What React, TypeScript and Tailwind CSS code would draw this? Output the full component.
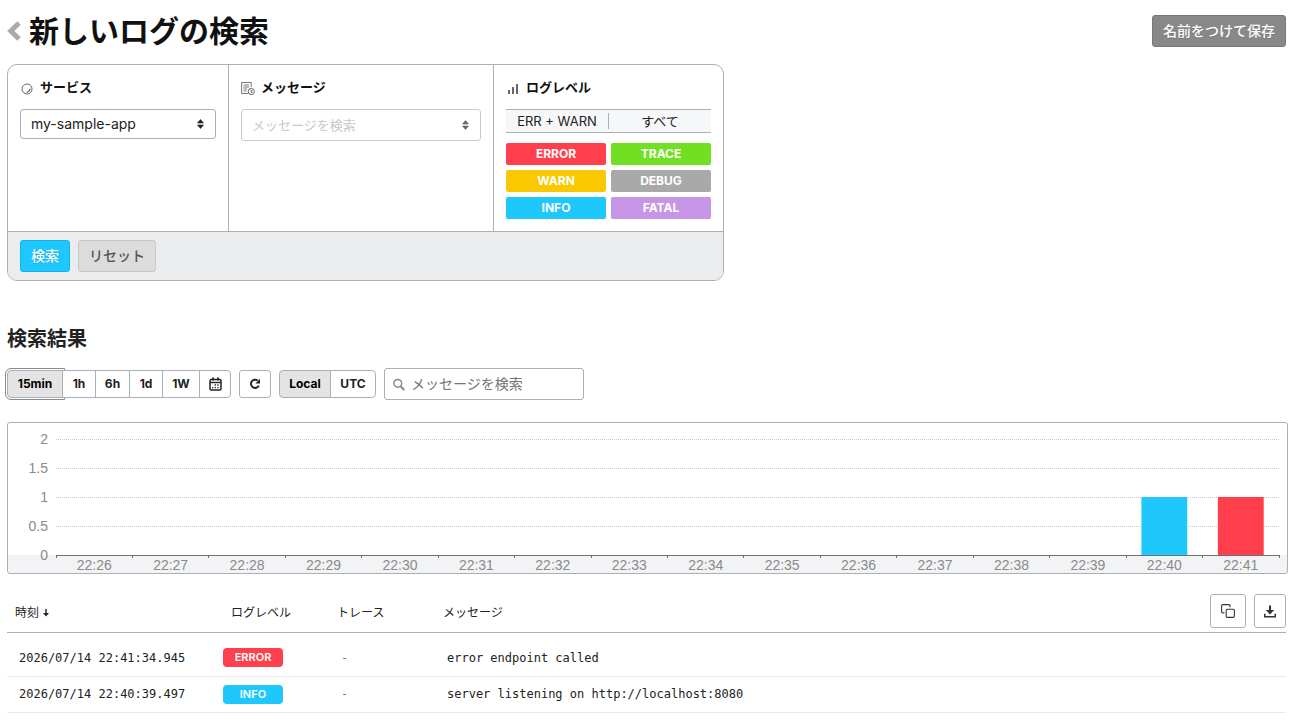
import React from 'react';
import clsx from 'clsx';

const levels = [
  { name: 'ERROR', color: 'bg-[#ff3f4c]' },
  { name: 'TRACE', color: 'bg-[#71df22]' },
  { name: 'WARN', color: 'bg-[#f9c800]' },
  { name: 'DEBUG', color: 'bg-[#a9a9a9]' },
  { name: 'INFO', color: 'bg-[#1ec7fc]' },
  { name: 'FATAL', color: 'bg-[#c795e5]' },
];

const logs = [
  { time: '2026/07/14 22:41:34.945', level: 'ERROR', color: 'bg-[#ff3f4c]', message: 'error endpoint called' },
  { time: '2026/07/14 22:40:39.497', level: 'INFO', color: 'bg-[#1ec7fc]', message: 'server listening on http://localhost:8080' },
];

const buckets = Array.from({ length: 16 }, (_, i) => ({
  label: `22:${26 + i}`,
  count: i >= 14 ? 1 : 0,
  color: i === 15 ? '#ff3f4c' : '#1ec7fc',
}));

const yTicks = [2, 1.5, 1, 0.5, 0];

function SortArrows({ className }: { className?: string }) {
  return (
    <svg className={className} width="7" height="10" viewBox="0 0 7 10" fill="currentColor" aria-hidden="true">
      <path d="M3.5 0.5 6.5 4h-6zM3.5 9.5 6.5 6h-6z" stroke="currentColor" strokeWidth="0.6" strokeLinejoin="round" />
    </svg>
  );
}

function ServiceIcon() {
  return (
    <svg width="14" height="14" viewBox="0 0 14 14" fill="none" stroke="#555" aria-hidden="true">
      <circle cx="7" cy="8" r="5" strokeWidth="0.9" />
      <path d="M10 7.8a3 3 0 0 1-3.2 3.2l2-.4z" strokeWidth="0.8" />
    </svg>
  );
}

function MessageIcon() {
  return (
    <svg width="14" height="14" viewBox="0 0 14 14" fill="none" stroke="#666" aria-hidden="true">
      <path d="M7 12.5H.6V1.5h9.6v4.6M2.5 4h5.6M2.5 6h5.6M2.5 8h3.6M2.5 10h3" strokeWidth="0.9" />
      <circle cx="10.3" cy="10.5" r="3.1" />
      <path d="M9.6 8.8l1.4 3.2M10.9 8.8v3" strokeWidth="0.8" />
    </svg>
  );
}

function LevelIcon() {
  return (
    <svg width="14" height="14" viewBox="0 0 14 14" fill="#666" aria-hidden="true">
      <path d="M2 9h2v4H2zM6 6h2v7H6zM10 3h2v10h-2z" />
    </svg>
  );
}

function CalendarIcon() {
  return (
    <svg width="13" height="14" viewBox="0 0 13 14" fill="none" stroke="#222" aria-hidden="true">
      <rect x="1" y="2.5" width="11" height="10.5" rx="1.2" strokeWidth="1.5" />
      <path d="M1 5.5h11" strokeWidth="1.4" />
      <path d="M4 .5v3M9 .5v3" strokeWidth="1.8" />
      <path d="M5.6 8h1.3M8.3 8h1.3M3 10.6h1.3M5.6 10.6h1.3M8.3 10.6h1.3" strokeWidth="1.4" />
    </svg>
  );
}

function ReloadIcon() {
  return (
    <svg width="12" height="12" viewBox="0 0 12 12" fill="none" stroke="#222" aria-hidden="true">
      <path d="M8.6 2.6A4.1 4.1 0 1 0 9.8 7.6" strokeWidth="1.9" />
      <path d="M11 .8v4.6H6.4z" fill="#222" stroke="none" />
    </svg>
  );
}

function CopyIcon() {
  return (
    <svg width="14" height="14" viewBox="0 0 14 14" fill="none" stroke="#333" strokeWidth="1.1" aria-hidden="true">
      <rect x="5.2" y="5.2" width="8.2" height="8.2" rx="1.2" />
      <path d="M3.4 8.9H1.8A1.2 1.2 0 0 1 .6 7.7V1.8A1.2 1.2 0 0 1 1.8.6h6a1.2 1.2 0 0 1 1.2 1.2v1.4" />
    </svg>
  );
}

function DownloadIcon() {
  return (
    <svg width="12" height="13" viewBox="0 0 12 13" fill="#333" aria-hidden="true">
      <path d="M5 .5h2V5h3.2L6 9.5 1.8 5H5z" />
      <path d="M.8 8.7v3.1h10.4V8.7" fill="none" stroke="#333" strokeWidth="1.5" />
    </svg>
  );
}

function FilterColumn({ icon, title, children }: { icon: React.ReactNode; title: string; children: React.ReactNode }) {
  return (
    <div className="border-r border-[#aeafb4] p-3 last:border-r-0">
      <h2 className="mb-2.5 flex h-[22px] items-center gap-1.5 text-[13px] font-bold text-[#111]">
        {icon}
        {title}
      </h2>
      {children}
    </div>
  );
}

function FilterPanel() {
  return (
    <form className="w-fit overflow-hidden rounded-[10px] border border-[#aeafb4]" onSubmit={(e) => e.preventDefault()}>
      <div className="flex">
        <FilterColumn icon={<ServiceIcon />} title="サービス">
          <div className="relative w-[196px]">
            <select
              aria-label="サービス"
              className="block h-[30px] w-full appearance-none rounded-[3px] border border-[#aeafb4] bg-white px-2.5 text-sm text-[#222]"
            >
              <option>my-sample-app</option>
            </select>
            <SortArrows className="pointer-events-none absolute top-2.5 right-3 text-[#222]" />
          </div>
        </FilterColumn>

        <FilterColumn icon={<MessageIcon />} title="メッセージ">
          <div className="relative w-[240px]">
            <input
              aria-label="メッセージ"
              placeholder="メッセージを検索"
              className="block h-8 w-full rounded-[3px] border border-[#c9c9cb] px-2.5 text-[13px] placeholder:text-[#c8c8c8]"
            />
            <SortArrows className="pointer-events-none absolute top-[11px] right-3 text-[#666]" />
          </div>
        </FilterColumn>

        <FilterColumn icon={<LevelIcon />} title="ログレベル">
          <div className="flex h-6 w-[205px] items-center border-y border-[#aeafb4] bg-[#f6f7f9] text-[13px] leading-4 text-[#222]">
            <button type="button" className="flex-1 border-r border-[#aeafb4]">ERR + WARN</button>
            <button type="button" className="flex-1">すべて</button>
          </div>
          <div className="mt-2.5 grid w-[205px] grid-cols-2 gap-[5px]">
            {levels.map((level) => (
              <button
                key={level.name}
                type="button"
                className={clsx('h-[22px] rounded-xs text-xs font-bold text-white', level.color)}
              >
                {level.name}
              </button>
            ))}
          </div>
        </FilterColumn>
      </div>

      {/* Actions */}
      <div className="flex gap-2 border-t border-[#aeafb4] bg-[#ebecee] px-3 py-2 text-sm font-medium">
        <button type="submit" className="h-8 rounded-[3px] border border-[#14b4e8] bg-[#1ec7fc] px-2.5 text-white text-shadow-2xs">
          検索
        </button>
        <button type="reset" className="h-8 rounded-[3px] border border-[#c8c8c8] bg-[#dcdcdc] px-2.5 text-[#555]">
          リセット
        </button>
      </div>
    </form>
  );
}

function Toolbar() {
  const segment = 'relative flex h-[28px] items-center justify-center border border-[#aeafb4] -ml-px first:ml-0 first:rounded-l-[4px] last:rounded-r-[4px]';

  return (
    <div className="flex items-center gap-2 text-xs font-bold text-[#222]">
      <div className="flex">
        <button className={clsx(segment, 'w-[56px] bg-[#e4e4e4] text-black outline outline-offset-1 outline-[#8a8a8e]')}>15min</button>
        <button className={clsx(segment, 'w-[34px] bg-white')}>1h</button>
        <button className={clsx(segment, 'w-[35px] bg-white')}>6h</button>
        <button className={clsx(segment, 'w-[34px] bg-white')}>1d</button>
        <button className={clsx(segment, 'w-[38px] bg-white')}>1W</button>
        <button aria-label="期間を指定" className={clsx(segment, 'w-[32px] bg-white')}>
          <CalendarIcon />
        </button>
      </div>
      <button aria-label="更新" className="flex h-[28px] w-8 items-center justify-center rounded-[3px] border border-[#aeafb4]">
        <ReloadIcon />
      </button>
      <div className="flex">
        <button className={clsx(segment, 'w-[52px] bg-[#e4e4e4] text-black')}>Local</button>
        <button className={clsx(segment, 'w-[46px] bg-white')}>UTC</button>
      </div>
      <label className="flex h-8 w-[200px] items-center gap-1.5 rounded-[3px] border border-[#aeafb4] px-2">
        <svg width="12" height="13" viewBox="0 0 12 13" fill="none" stroke="#888" className="shrink-0" aria-hidden="true">
          <circle cx="4.8" cy="5.3" r="3.9" strokeWidth="1.5" />
          <path d="M7.6 8.2l3.6 3.8" strokeWidth="2" />
        </svg>
        <input
          aria-label="メッセージを検索"
          placeholder="メッセージを検索"
          className="w-full min-w-0 text-sm font-normal outline-none placeholder:text-[#757575]"
        />
      </label>
    </div>
  );
}

function Histogram() {
  const step = 100 / buckets.length;
  const baseline = 132;

  return (
    <div className="-mr-0.5 rounded-[3px] border border-[#aeafb4] bg-[linear-gradient(#fff_132px,#f2f3f5_132px)] pr-2 pl-12">
      <svg width="100%" height="150" className="block overflow-visible font-['Liberation_Sans',sans-serif] text-sm" fill="#8a8a8a" role="img" aria-label="ログ件数">
        {yTicks.map((tick) => {
          const y = baseline - tick * 58;
          return (
            <g key={tick}>
              <text x="-8" y={y + 5} textAnchor="end">{tick}</text>
              {tick > 0 && <line x1="0" x2="100%" y1={y + 0.5} y2={y + 0.5} stroke="#c8c8c8" strokeDasharray="1 1" />}
            </g>
          );
        })}
        {buckets.map((bucket, i) => (
          <g key={bucket.label}>
            {bucket.count > 0 && (
              <rect
                x={`${(i + 0.2) * step}%`}
                y={baseline - bucket.count * 58}
                width={`${step * 0.6}%`}
                height={bucket.count * 58}
                fill={bucket.color}
              />
            )}
            <text x={`${(i + 0.5) * step}%`} y="147" textAnchor="middle">{bucket.label}</text>
          </g>
        ))}
        <g stroke="#6e7079" shapeRendering="crispEdges">
          <line x1="0" x2="100%" y1={baseline + 0.5} y2={baseline + 0.5} />
          {Array.from({ length: buckets.length + 1 }, (_, i) => (
            <line key={i} x1={`${i * step}%`} x2={`${i * step}%`} y1={baseline} y2={baseline + 3} />
          ))}
        </g>
      </svg>
    </div>
  );
}

function LogTable() {
  return (
    <table className="w-full table-fixed text-left">
      <colgroup>
        <col className="w-[216px]" />
        <col className="w-[106px]" />
        <col className="w-[106px]" />
        <col />
      </colgroup>
      <thead className="border-b border-[#aeafb4] text-xs text-[#222]">
        <tr>
          <th className="px-2 font-normal">
            <span className="flex items-center gap-1">
              時刻
              <svg width="6" height="8" viewBox="0 0 6 8" fill="#222" aria-hidden="true">
                <path d="M2.3 0h1.4v4H6L3 7.5 0 4h2.3z" />
              </svg>
            </span>
          </th>
          <th className="px-2 font-normal">ログレベル</th>
          <th className="px-2 font-normal">トレース</th>
          <th className="pl-2 font-normal">
            <div className="flex items-center gap-2">
              <span className="flex-1">メッセージ</span>
              <button aria-label="コピー" className="mb-1 flex h-[34px] w-9 items-center justify-center rounded-[3px] border border-[#aeafb4]">
                <CopyIcon />
              </button>
              <button aria-label="ダウンロード" className="mb-1 flex h-[34px] w-8 items-center justify-center rounded-[3px] border border-[#aeafb4]">
                <DownloadIcon />
              </button>
            </div>
          </th>
        </tr>
      </thead>
      <tbody className="font-['DejaVu_Sans_Mono',monospace] text-xs text-[#222] before:block before:h-[7px]">
        {logs.map((log) => (
          <tr key={log.time} className="h-9 border-b border-[#ebebeb]">
            <td className="px-3">{log.time}</td>
            <td>
              <span className={clsx("flex h-[19px] w-[60px] items-center justify-center rounded-[4px] font-['Inter',sans-serif] text-[11px] font-semibold text-white", log.color)}>
                {log.level}
              </span>
            </td>
            <td className="px-3 text-[#777]">-</td>
            <td className="px-3">{log.message}</td>
          </tr>
        ))}
      </tbody>
    </table>
  );
}

export default function App() {
  return (
    <main className="min-h-screen bg-white pt-[11px] pr-2.5 pl-[7px] font-['Inter','Noto_Sans_CJK_JP',sans-serif] text-[#222]">
      {/* Page header */}
      <header className="mb-[13px] flex h-10 items-center justify-between">
        <div className="flex items-center gap-2">
          <a href="#" aria-label="戻る">
            <svg width="14" height="22" viewBox="0 0 14 22" fill="none" stroke="#aaa" strokeWidth="5" aria-hidden="true">
              <path d="M12 3 3.8 11l8.2 8" />
            </svg>
          </a>
          <h1 className="text-3xl font-bold text-[#111]">新しいログの検索</h1>
        </div>
        <button className="h-8 rounded-[3px] border border-[#777] bg-[#888] px-2.5 text-sm font-medium text-white text-shadow-2xs">
          名前をつけて保存
        </button>
      </header>

      <FilterPanel />

      {/* Search results */}
      <section className="mt-11">
        <h2 className="mb-[15px] text-xl font-bold">検索結果</h2>
        <Toolbar />
        <div className="mt-[22px] mb-5">
          <Histogram />
        </div>
        <LogTable />
      </section>
    </main>
  );
}
